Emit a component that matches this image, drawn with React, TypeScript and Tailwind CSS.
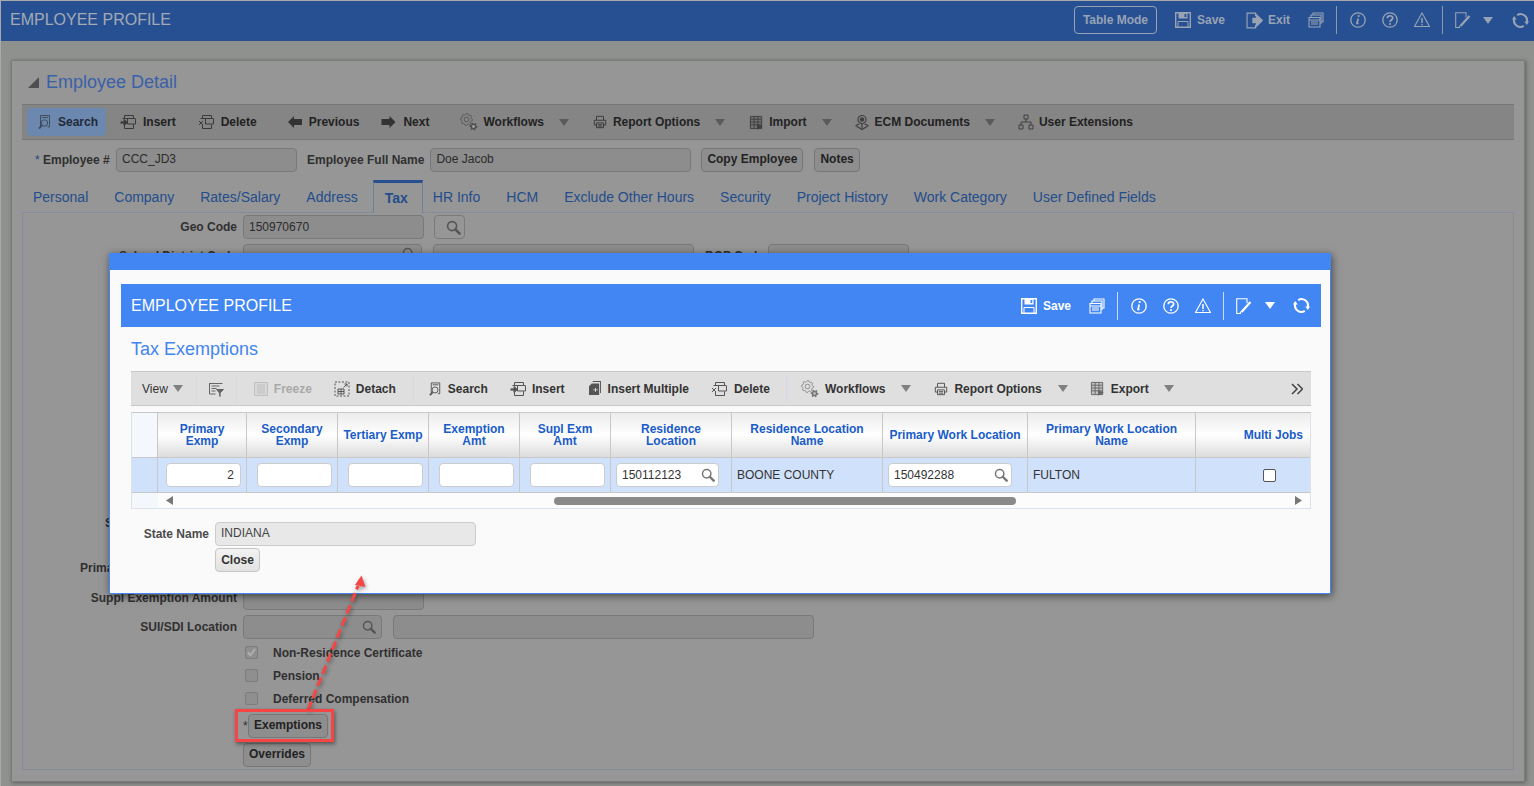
import React from "react";

type P = { className?: string };
const S = ({ className = "w-4 h-4", children, sw = 1 }: P & { children: React.ReactNode; sw?: number }) => (
  <svg viewBox="0 0 16 16" className={className} fill="none" stroke="currentColor" strokeWidth={sw}>{children}</svg>
);
const gear = (cx: number, cy: number, r1: number, r2: number, n: number) => {
  const pts: string[] = [];
  for (let i = 0; i < n * 4; i++) {
    const a = (i / (n * 4)) * Math.PI * 2;
    const r = i % 4 < 2 ? r2 : r1;
    pts.push(`${(cx + r * Math.cos(a)).toFixed(2)} ${(cy + r * Math.sin(a)).toFixed(2)}`);
  }
  return `M${pts.join("L")}Z`;
};
const SearchDoc = (p: P) => (<S {...p}><path d="M3.500 13V1.500h9V13h-2" /><path d="M5 3.500h6" /><circle cx="7.500" cy="9" r="3.200" /><path d="M5 11.500L2 14.500" strokeWidth="1.800" /></S>);
const InsertI = (p: P) => (<S {...p}><path d="M4.500 4.500v-3h9v3M2.500 4.500h13M7.500 5v5h8V5M4.500 10.500v4h9v-4" /><path d="M.5 8.500h4" strokeWidth="2.200" /><path d="M4 5.500l3.500 3-3.500 3z" fill="currentColor" /></S>);
const DeleteI = (p: P) => (<S {...p}><path d="M4.500 4.500v-3h9v3M2.500 4.500h13M7.500 5v5h8V5M4.500 10.500v4h9v-4" /><path d="M1 7l4 4M5 7l-4 4" /></S>);
const ArrowL = (p: P) => (<svg viewBox="0 0 14 12" className={p.className} fill="currentColor"><path d="M0 6l6-6v3h8v6H6v3z" /></svg>);
const ArrowR = (p: P) => (<svg viewBox="0 0 14 12" className={p.className} fill="currentColor"><path d="M14 6L8 0v3H0v6h8v3z" /></svg>);
const Gears = (p: P) => (
  <svg viewBox="0 0 18 18" className={p.className} fill="none" stroke="currentColor">
    <path d={gear(6.5, 6.5, 4.8, 6, 8)} strokeWidth="1" strokeOpacity=".75" /><circle cx="6.500" cy="6.500" r="2.300" strokeOpacity=".75" />
    <path d={gear(13.5, 13.5, 2.800, 4, 6)} fill="currentColor" stroke="none" /><circle cx="13.500" cy="13.500" r="1.400" fill="#dfdfdf" fillOpacity=".6" stroke="none" />
  </svg>
);
const Printer = (p: P) => (<S {...p} sw={1.1}><path d="M4 6V1.500h8V6" /><path d="M4 11.500H1.500V6h13v5.500H12" /><path d="M4 9h8v5.500H4z" /><path d="M5.500 11h5M5.500 12.800h5" /></S>);
const TableI = (p: P) => (<S {...p}><path d="M1.500 1.500h12v13h-12z" fill="currentColor" fillOpacity=".25" /><path d="M1.500 4.500h12M1.500 7.500h12M1.500 10.500h12M5.500 1.500v13M9.500 1.500v13" /><path d="M9 10l5 2.500L9 15z" fill="currentColor" /></S>);
const EcmI = (p: P) => (
  <S {...p} sw={1.2}><circle cx="8" cy="5" r="4" /><circle cx="8" cy="5" r="1.600" fill="currentColor" /><path d="M8 9v5" /><path d="M1.500 11l4-1.500M14.500 11l-4-1.500M1.500 11L8 15l6.500-4" /></S>
);
const Net = (p: P) => (<S {...p}><path d="M6 1h4v4H6zM1 11h4v4H1zM11 11h4v4h-4zM8 5v3M3 11V8h10v3" /></S>);
const SaveI = (p: P) => (
  <S {...p} sw={1.400}>
    <path d="M.7.700h14.600v14.600H.7z" />
    <path fillRule="evenodd" d="M3.500 1h9v5.500h-9zM9.500 2v3h1.800V2z" fill="currentColor" stroke="none" />
    <path d="M3 15V9.500h10V15" strokeWidth="1" />
  </S>
);
const ExitI = (p: P) => (<S {...p} sw={1.100}><path d="M9 4V1H1v14h8v-3" /><path d="M6.500 6h3.500V2.800L15.500 8 10 13.200V10H6.500z" fill="currentColor" /></S>);
const Docs = (p: P) => (<S {...p} sw={1.100}><path d="M5 3V1h10v9h-2" /><path d="M3 5V3h10v9" /><path d="M1 5.500h11V15H1z" /><path d="M1 8h11M3 10h7M3 12h7" /></S>);
const Info = (p: P) => (<S {...p} sw={1.300}><circle cx="8" cy="8" r="7.200" /><path d="M8.200 6.500L7 11.500h1.600" strokeWidth="1.700" /><circle cx="8.700" cy="4" r="1.100" fill="currentColor" stroke="none" /></S>);
const Help = (p: P) => (<S {...p} sw={1.300}><circle cx="8" cy="8" r="7.200" /><path d="M5.300 6.200C5.300 3 10.700 3 10.700 6c0 2-2.700 2-2.700 4" strokeWidth="1.700" /><circle cx="8" cy="12" r="1.100" fill="currentColor" stroke="none" /></S>);
const Warn = (p: P) => (<S {...p} sw={1.100}><path d="M8 1l7.500 13.500H.5z" /><path d="M8 6v5" strokeWidth="1.500" /><circle cx="8" cy="12.600" r=".8" fill="currentColor" stroke="none" /></S>);
const Note = (p: P) => (<S {...p} sw={1.100}><path d="M5 15.500H.7V.7h10.300v4.500" /><path d="M5.500 14L14.500 4" strokeWidth="2.200" /><path d="M3.800 15.800l1.200-2.400" /></S>);
const Refresh = (p: P) => (
  <svg viewBox="0 0 18 18" className={p.className} fill="none" stroke="currentColor" strokeWidth="2.200">
    <path d="M5.500 3.200A6.800 6.800 0 0 1 15.700 10.500" />
    <path d="M12.500 14.800A6.800 6.800 0 0 1 2.300 7.500" />
    <path d="M13 10h5l-2.300 3.800z" fill="currentColor" stroke="none" />
    <path d="M5 8H0l2.300-3.800z" fill="currentColor" stroke="none" />
  </svg>
);
const Filter = (p: P) => (<S {...p}><path d="M1.500 2.500h13M1.500 2v11h6" /><path d="M3.500 5h8M3.500 7.500h5M3.500 10h4" /><path d="M8.500 8.500h7L12 12v3.500L11.500 12z" fill="currentColor" /></S>);
const Freeze = (p: P) => (<S {...p}><path d="M1.500 1.500h13v13h-13z" fill="currentColor" fillOpacity=".2" /><path d="M5 3v10M7 3v10M9 3v10M11 3v10" /></S>);
const Detach = (p: P) => (<S {...p}><path d="M1 1h14v14H1z" strokeDasharray="2 1.500" /><path d="M9.500 6.500L13 3M10.500 3H13v2.500" /><path d="M4 8h6v5H4zM4 10.500h6M7 8v5" /></S>);
const Multi = (p: P) => (<svg viewBox="0 0 13 16" className={p.className} fill="currentColor"><path d="M4 0h9v13h-1V1H4z" /><path d="M3 2.500h8V15H0V5.500z" /><path d="M4.500 9h2V7.500h1V9h2v1h-2v1.500h-1V10h-2z" fill="#dfdfdf" /></svg>);
const Mag = (p: P) => (<svg viewBox="0 0 16 16" className={p.className} fill="none" stroke="currentColor"><circle cx="6.500" cy="6.500" r="4.800" strokeWidth="1.700" /><path d="M10 10l4.500 4.500" strokeWidth="2.800" strokeLinecap="round" /></svg>);
const Caret = ({ className = "" }: P) => (<svg viewBox="0 0 10 7" className={`w-[10px] h-[7px] ${className}`} fill="currentColor"><path d="M0 0h10L5 7z" /></svg>);

const T = ({ icon, label, className = "", gap = "gap-[6px]" }: { icon: React.ReactNode; label: string; className?: string; gap?: string }) => (
  <div className={`flex items-center ${gap} ${className}`}>{icon}<span className="font-bold whitespace-nowrap">{label}</span></div>
);

const Tabs = ["Personal", "Company", "Rates/Salary", "Address", "Tax", "HR Info", "HCM", "Exclude Other Hours", "Security", "Project History", "Work Category", "User Defined Fields"];

const dimInput = "h-[24px] bg-[#8d8d8d] border border-[#797979] rounded-[4px] text-[12px] text-[#2b2b2b] px-[5px]";
const dimBtn = "h-[24px] bg-[#8e8e8e] border border-[#777777] rounded-[4px] text-[12px] font-bold text-[#222222] leading-[21px] px-[5px]";
const Lbl = ({ children }: { children?: React.ReactNode }) => (
  <div className="w-[214px] text-right text-[12px] font-bold text-[#303030] whitespace-nowrap">{children}</div>
);

const hdrCols = [
  "", "Primary Exmp", "Secondary Exmp", "Tertiary Exmp", "Exemption Amt", "Supl Exm Amt", "Residence Location", "Residence Location Name", "Primary Work Location", "Primary Work Location Name", "Multi Jobs",
];
const hdrPad = ["", "px-[14px]", "px-[14px]", "", "px-[14px]", "px-[14px]", "px-[16px]", "px-[10px]", "", "px-[10px]", ""];

const CellInput = ({ className = "", value = "" }: { className?: string; value?: string }) => (
  <div className={`h-[24px] bg-white border border-[#cccccc] rounded-[4px] text-[12px] text-[#333333] leading-[22px] px-[6px] ${className}`}>{value}</div>
);

export default function App() {
  return (
    <div className="relative w-[1534px] h-[786px] overflow-hidden bg-[#8f918f] [font-family:'Liberation_Sans',Arial,sans-serif] text-[12px] border-t border-l border-[#a9a9a9]">
      {/* app header */}
      <header className="h-[40px] pb-[2px] bg-[#275093] flex items-center text-[#98a3b3]">
        <div className="pl-[9px] text-[16px] text-[#a3aab5]">EMPLOYEE PROFILE</div>
        <div className="ml-auto flex items-center pr-[5px]">
          <div className="w-[83px] h-[28px] border border-[#97a3b5] rounded-[4px] flex items-center justify-center font-bold">Table Mode</div>
          <T className="ml-[18px]" icon={<SaveI className="w-4 h-4" />} label="Save" />
          <T className="ml-[21px]" gap="gap-[5px]" icon={<ExitI className="w-[17px] h-[17px]" />} label="Exit" />
          <Docs className="ml-[18px] w-4 h-4" />
          <div className="ml-[12px] w-px h-[28px] bg-[#8d99ac]" />
          <Info className="ml-[13px] w-4 h-4" />
          <Help className="ml-[16px] w-4 h-4" />
          <Warn className="ml-[16px] w-4 h-4" />
          <div className="ml-[12px] w-px h-[28px] bg-[#8d99ac]" />
          <Note className="ml-[12px] w-4 h-4" />
          <Caret className="ml-[12px]" />
          <Refresh className="ml-[19px] w-[17px] h-[17px]" />
        </div>
      </header>

      {/* detail panel */}
      <main className="ml-[10px] mr-[9px] mt-[19px] h-[722px] bg-[#969696] border border-[#7b7b7b] shadow-[1px_1px_4px_rgba(0,0,0,0.35)] px-[10px]">
        <div className="h-[43px] flex items-center pl-[6px]">
          <svg viewBox="0 0 11 11" className="w-[11px] h-[11px] text-[#4f4f4f]" fill="currentColor"><path d="M11 0v11H0z" /></svg>
          <h1 className="ml-[7px] text-[18px] font-normal text-[#3a61a8]">Employee Detail</h1>
        </div>
        {/* toolbar */}
        <div className="h-[36px] bg-[#858585] border-y border-[#777777] flex items-center pl-[5px] text-[#222222]">
          <div className="h-[28px] w-[79px] bg-[#6d88ae] rounded-[4px] flex items-center pl-[10px] text-[#1f2a3a]">
            <SearchDoc className="w-4 h-4 text-[#3f4d61]" />
            <span className="ml-[5px] font-bold">Search</span>
          </div>
          <T className="ml-[14px]" gap="gap-[7px]" icon={<InsertI className="w-4 h-4 text-[#3a3a3a]" />} label="Insert" />
          <T className="ml-[22px]" gap="gap-[7px]" icon={<DeleteI className="w-4 h-4 text-[#3a3a3a]" />} label="Delete" />
          <T className="ml-[31px]" gap="gap-[7px]" icon={<ArrowL className="w-[14px] h-[12px] text-[#333333]" />} label="Previous" />
          <T className="ml-[22px]" gap="gap-[7px]" icon={<ArrowR className="w-[15px] h-[12px] text-[#333333]" />} label="Next" />
          <T className="ml-[31px]" gap="gap-[5px]" icon={<Gears className="w-[18px] h-[18px] text-[#4d4d4d]" />} label="Workflows" />
          <Caret className="ml-[15px] text-[#5a5a5a]" />
          <T className="ml-[24px]" icon={<Printer className="w-[14px] h-[14px] text-[#3a3a3a]" />} label="Report Options" />
          <Caret className="ml-[15px] text-[#5a5a5a]" />
          <T className="ml-[24px]" gap="gap-[5px]" icon={<TableI className="w-[15px] h-[15px] text-[#3f3f3f]" />} label="Import" />
          <Caret className="ml-[15px] text-[#5a5a5a]" />
          <T className="ml-[22px]" gap="gap-[5px]" icon={<EcmI className="w-[16px] h-[17px] text-[#3f3f3f]" />} label="ECM Documents" />
          <Caret className="ml-[15px] text-[#5a5a5a]" />
          <T className="ml-[23px]" gap="gap-[5px]" icon={<Net className="w-[16px] h-[16px] text-[#3f3f3f]" />} label="User Extensions" />
        </div>
        {/* employee row */}
        <div className="mt-[8px] flex items-center">
          <div className="w-[88px] pl-[13px] font-bold text-[#303030] whitespace-nowrap"><span className="font-normal text-[#25457a]">*</span> Employee #</div>
          <div className={`${dimInput} leading-[21px] ml-[6px] w-[181px]`}>CCC_JD3</div>
          <div className="ml-[10px] font-bold text-[#303030] whitespace-nowrap">Employee Full Name</div>
          <div className={`${dimInput} leading-[21px] ml-[6px] w-[261px]`}>Doe Jacob</div>
          <div className={`${dimBtn} ml-[10px]`}>Copy Employee</div>
          <div className={`${dimBtn} ml-[11px]`}>Notes</div>
        </div>
        {/* tabs */}
        <div className="mt-[8px] h-[33px] flex relative z-10">
          {Tabs.map((t) =>
            t === "Tax" ? (
              <div key={t} className="h-[33px] ml-[2px] -mr-[3px] pl-[11px] pr-[14px] border-x border-[#6f7f96] border-t-[3px] border-t-[#26508f] bg-[#969696] text-[14px] font-bold text-[#234d8c] leading-[30px]">{t}</div>
            ) : (
              <div key={t} className="h-[33px] px-[13px] text-[14px] text-[#234d8c] leading-[34px] whitespace-nowrap first:pl-[11px]">{t}</div>
            )
          )}
        </div>
        {/* tab body */}
        <div className="h-[558px] -mt-px border border-[#858c97] pt-[2px]">
          <div className="flex h-[24px] mb-[5px] items-center">
            <Lbl>Geo Code</Lbl>
            <div className={`${dimInput} leading-[23px] ml-[6px] w-[181px]`}>150970670</div>
            <div className="ml-[10px] w-[31px] h-[24px] pl-[7px] border border-[#7a7a7a] rounded-[4px] flex items-center justify-center text-[#555555]"><Mag className="w-[15px] h-[15px]" /></div>
          </div>
          <div className="flex h-[24px] mb-[5px] items-center">
            <Lbl>School District Code</Lbl>
            <div className={`${dimInput} ml-[6px] w-[179px] flex justify-end items-start pt-[2px] text-[#555555]`}><Mag className="w-[14px] h-[14px]" /></div>
            <div className={`${dimInput} ml-[11px] w-[261px]`} />
            <div className="ml-[11px] w-[57px] text-right font-bold text-[#303030] whitespace-nowrap">BOP Code</div>
            <div className={`${dimInput} ml-[6px] w-[141px]`} />
          </div>
          <div className="h-[238px]" />
          <div className="flex h-[24px] mb-[21px] items-center pl-[82px] font-bold text-[#303030]">S</div>
          <div className="flex h-[24px] mb-[6px] items-center pl-[57px] font-bold text-[#303030]">Prima</div>
          <div className="flex h-[24px] mb-[5px] items-center">
            <Lbl>Suppl Exemption Amount</Lbl>
            <div className={`${dimInput} ml-[6px] w-[181px]`} />
          </div>
          <div className="flex h-[24px] items-center">
            <Lbl>SUI/SDI Location</Lbl>
            <div className={`${dimInput} ml-[6px] w-[139px] flex justify-end items-center text-[#555555]`}><Mag className="w-[14px] h-[14px]" /></div>
            <div className={`${dimInput} ml-[11px] w-[421px]`} />
          </div>
          <div className="ml-[222px] mt-[2px] flex flex-col">
            {[
              ["Non-Residence Certificate", true],
              ["Pension", false],
              ["Deferred Compensation", false],
            ].map(([l, c]) => (
              <div key={l as string} className="h-[23px] flex items-center font-bold text-[#303030]">
                <div className="w-[13px] h-[13px] border border-[#7c7c7c] rounded-[2px] bg-[#8f8f8f] flex items-center justify-center">
                  {c ? <svg viewBox="0 0 12 12" className="w-[11px] h-[11px] text-[#b0b0b0]" fill="none" stroke="currentColor" strokeWidth="2"><path d="M2 6l3 3 5-7" /></svg> : null}
                </div>
                <span className="ml-[15px]">{l as string}</span>
              </div>
            ))}
          </div>
          <div className="ml-[220px] mt-[4px] flex items-center">
            <span className="w-[5px] text-[#303030]">*</span>
            <div className={`${dimBtn} w-[80px] text-center`}>Exemptions</div>
          </div>
          <div className={`${dimBtn} ml-[220px] mt-[5px] w-[68px] text-center`}>Overrides</div>
        </div>
      </main>

      {/* modal */}
      <div className="absolute left-[108px] top-[252px] w-[1222px] h-[341px] bg-[#fafafa] border border-[#4286f3] border-t-[17px] shadow-[1px_2px_8px_rgba(0,0,0,0.55)] pt-[14px] pl-[11px] pr-[9px]">
        <div className="h-[43px] bg-[#4286f3] flex items-center text-white">
          <div className="pl-[10px] text-[16px]">EMPLOYEE PROFILE</div>
          <div className="ml-auto flex items-center pr-[11px]">
            <T icon={<SaveI className="w-4 h-4" />} label="Save" />
            <Docs className="ml-[18px] w-4 h-4" />
            <div className="ml-[12px] w-px h-[28px] bg-[#c9dcfb]" />
            <Info className="ml-[13px] w-4 h-4" />
            <Help className="ml-[16px] w-4 h-4" />
            <Warn className="ml-[16px] w-4 h-4" />
            <div className="ml-[12px] w-px h-[28px] bg-[#c9dcfb]" />
            <Note className="ml-[12px] w-4 h-4" />
            <Caret className="ml-[13px]" />
            <Refresh className="ml-[18px] w-[17px] h-[17px]" />
          </div>
        </div>
        <h2 className="ml-[10px] mt-[11px] h-[22px] text-[18px] leading-[22px] font-normal text-[#4285f0]">Tax Exemptions</h2>
        {/* modal toolbar */}
        <div className="ml-[10px] mt-[11px] w-[1180px] h-[35px] bg-[#dfdfdf] border-y border-[#c8c8c8] flex items-center pl-[11px] text-[#333333]">
          <span>View</span>
          <Caret className="ml-[5px] text-[#808080]" />
          <div className="ml-[13px] w-px h-[28px] bg-[#d3dbe6]" />
          <Filter className="ml-[11px] w-4 h-4 text-[#666666]" />
          <div className="ml-[12px] w-px h-[28px] bg-[#d3dbe6]" />
          <T className="ml-[16px] text-[#a9a9a9]" gap="gap-[5px]" icon={<Freeze className="w-4 h-4 text-[#c0c0c0]" />} label="Freeze" />
          <T className="ml-[22px]" icon={<Detach className="w-4 h-4 text-[#555555]" />} label="Detach" />
          <div className="ml-[17px] w-px h-[28px] bg-[#d3dbe6]" />
          <T className="ml-[14px]" gap="gap-[5px]" icon={<SearchDoc className="w-[15px] h-4 text-[#555555]" />} label="Search" />
          <T className="ml-[22px]" gap="gap-[6px]" icon={<InsertI className="w-4 h-4 text-[#555555]" />} label="Insert" />
          <T className="ml-[24px]" gap="gap-[7px]" icon={<Multi className="w-[12px] h-[15px] text-[#555555]" />} label="Insert Multiple" />
          <T className="ml-[22px]" gap="gap-[7px]" icon={<DeleteI className="w-4 h-4 text-[#555555]" />} label="Delete" />
          <div className="ml-[16px] w-px h-[28px] bg-[#d3dbe6]" />
          <T className="ml-[14px]" gap="gap-[6px]" icon={<Gears className="w-[18px] h-[18px] text-[#777777]" />} label="Workflows" />
          <Caret className="ml-[16px] text-[#808080]" />
          <T className="ml-[23px]" icon={<Printer className="w-[14px] h-[14px] text-[#555555]" />} label="Report Options" />
          <Caret className="ml-[16px] text-[#808080]" />
          <T className="ml-[22px]" gap="gap-[6px]" icon={<TableI className="w-[15px] h-[15px] text-[#666666]" />} label="Export" />
          <Caret className="ml-[15px] text-[#808080]" />
          <svg viewBox="0 0 12 12" className="ml-auto mr-[8px] w-[12px] h-[12px] text-[#444444]" fill="none" stroke="currentColor" strokeWidth="1.500"><path d="M1 1l5 5-5 5M6.500 1l5 5-5 5" /></svg>
        </div>
        {/* grid */}
        <div className="ml-[10px] mt-[6px] w-[1180px] h-[97px] border border-[#dbe2ec] border-t-[#c8c8c8]">
          <div className="grid grid-cols-[26px_89px_91px_91px_91px_91px_121px_151px_145px_168px_114px] h-[45px] border-b border-[#c8c8c8]">
            {hdrCols.map((h, i) => (
              <div
                key={i}
                className={`border-r border-[#c8c8c8] last:border-r-0 flex items-center text-center font-bold leading-[12px] text-[#1a5cc8] ${hdrPad[i]} ${i === 0 ? "bg-[#f4f7fc]" : "bg-linear-to-b from-[#ececec] via-white to-[#dcdcdc]"} ${i === 10 ? "justify-end pr-[7px]" : "justify-center"}`}
              >
                {h}
              </div>
            ))}
          </div>
          <div className="grid grid-cols-[26px_89px_91px_91px_91px_91px_121px_151px_145px_168px_114px] h-[35px] bg-[#d0e1fb] border-b border-[#c8c8c8] text-[#333333]">
            <div className="border-r border-[#c8c8c8]" />
            <div className="border-r border-[#c8c8c8] pl-[8px] pt-[5px]"><CellInput className="w-[75px] text-right" value="2" /></div>
            {[0, 1, 2, 3].map((i) => (
              <div key={i} className="border-r border-[#c8c8c8] pl-[10px] pt-[5px]"><CellInput className="w-[75px]" /></div>
            ))}
            <div className="border-r border-[#c8c8c8] pl-[5px] pt-[5px]">
              <div className="w-[103px] h-[24px] bg-white border border-[#cccccc] rounded-[4px] flex items-center justify-between pl-[5px] pr-[3px]">150112123<Mag className="w-[14px] h-[14px] text-[#777777]" /></div>
            </div>
            <div className="border-r border-[#c8c8c8] pl-[5px] flex items-center">BOONE COUNTY</div>
            <div className="border-r border-[#c8c8c8] pl-[5px] pt-[5px]">
              <div className="w-[124px] h-[24px] bg-white border border-[#cccccc] rounded-[4px] flex items-center justify-between pl-[5px] pr-[3px]">150492288<Mag className="w-[14px] h-[14px] text-[#777777]" /></div>
            </div>
            <div className="border-r border-[#c8c8c8] pl-[5px] flex items-center">FULTON</div>
            <div className="flex items-center justify-center pl-[33px]"><div className="w-[13px] h-[13px] bg-white border border-[#555555] rounded-[2px]" /></div>
          </div>
          <div className="h-[15px] flex items-center bg-[#fcfcfc]">
            <div className="w-[26px] h-full bg-[#f4f7fc]" />
            <svg viewBox="0 0 7 9" className="ml-[8px] w-[7px] h-[9px] text-[#777777]" fill="currentColor"><path d="M7 0v9L0 4.500z" /></svg>
            <div className="ml-[381px] w-[462px] h-[8px] rounded-full bg-[#8a8a8a]" />
            <svg viewBox="0 0 7 9" className="ml-auto mr-[8px] w-[7px] h-[9px] text-[#777777]" fill="currentColor"><path d="M0 0v9l7-4.500z" /></svg>
          </div>
        </div>
        {/* state */}
        <div className="mt-[13px] ml-[10px] flex items-center">
          <div className="w-[78px] text-right font-bold text-[#4a4a4a] whitespace-nowrap">State Name</div>
          <div className="ml-[6px] w-[261px] h-[24px] bg-[#e8e8e8] border border-[#cccccc] rounded-[4px] px-[5px] leading-[21px] text-[#444444]">INDIANA</div>
        </div>
        <div className="ml-[94px] mt-[2px] w-[45px] h-[24px] bg-linear-to-b from-[#f2f2f2] to-[#e2e2e2] border border-[#c6c6c6] rounded-[4px] flex items-center justify-center font-bold text-[#333333]">Close</div>
      </div>

      {/* annotation */}
      <svg className="absolute -left-px -top-px w-[1534px] h-[786px] pointer-events-none drop-shadow-[1px_2px_2px_rgba(0,0,0,0.4)]" viewBox="0 0 1534 786" fill="none">
        <path d="M308 710L358 586" stroke="#f64545" strokeWidth="3" strokeDasharray="9 4" />
        <path d="M361.500 575.500L365.500 587 355 585z" fill="#f64545" />
      </svg>
      <div className="absolute left-[234px] top-[708px] w-[99px] h-[33px] border-[3px] border-[#f64545] shadow-[1px_2px_4px_rgba(0,0,0,0.45)]" />
    </div>
  );
}
